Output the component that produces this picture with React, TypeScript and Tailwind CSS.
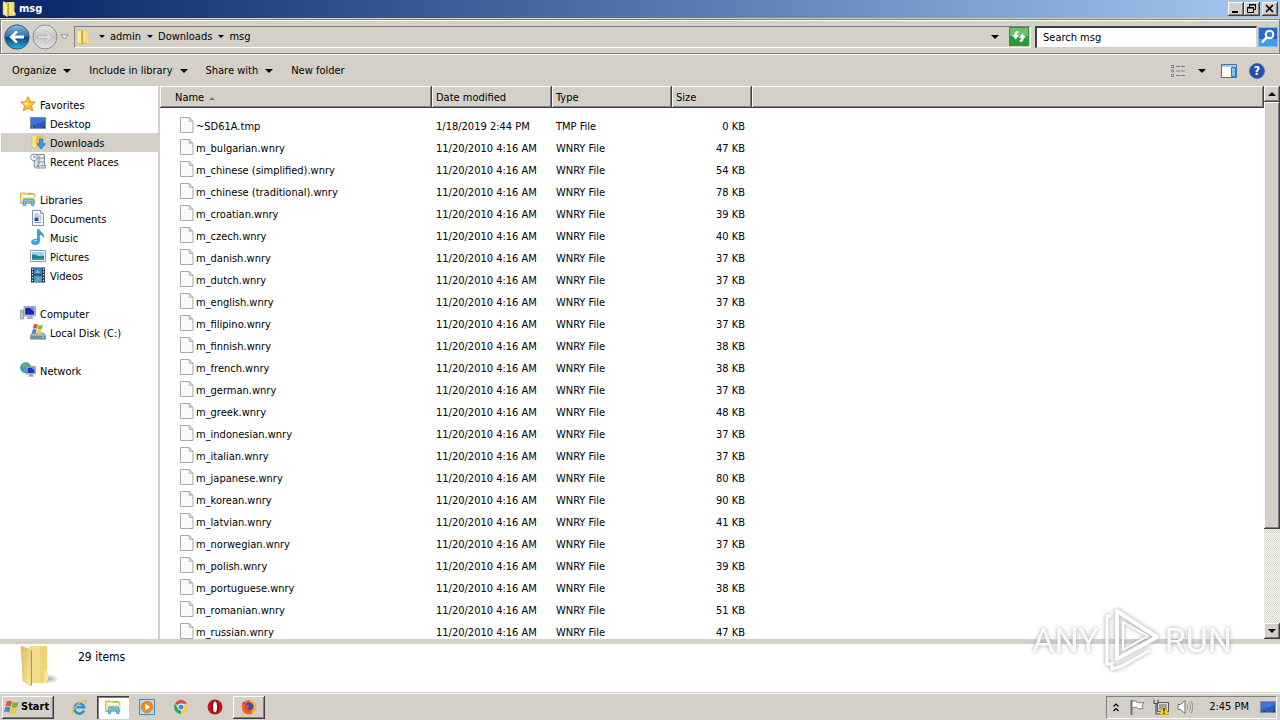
import { ReactNode } from "react";

const raised =
  "bg-[#d4d0c8] shadow-[inset_-1px_-1px_#404040,inset_1px_1px_#ffffff,inset_-2px_-2px_#808080]";
const sunken = "border border-t-[#808080] border-l-[#808080] border-b-white border-r-white";

const files = [
  { name: "~SD61A.tmp", date: "1/18/2019 2:44 PM", type: "TMP File", size: 0 },
  ...(
    [
      ["bulgarian", 47],
      ["chinese (simplified)", 54],
      ["chinese (traditional)", 78],
      ["croatian", 39],
      ["czech", 40],
      ["danish", 37],
      ["dutch", 37],
      ["english", 37],
      ["filipino", 37],
      ["finnish", 38],
      ["french", 38],
      ["german", 37],
      ["greek", 48],
      ["indonesian", 37],
      ["italian", 37],
      ["japanese", 80],
      ["korean", 90],
      ["latvian", 41],
      ["norwegian", 37],
      ["polish", 39],
      ["portuguese", 38],
      ["romanian", 51],
      ["russian", 47],
    ] as [string, number][]
  ).map(([lang, size]) => ({
    name: `m_${lang}.wnry`,
    date: "11/20/2010 4:16 AM",
    type: "WNRY File",
    size,
  })),
];

function Svg({ children, className = "size-4" }: { children: ReactNode; className?: string }) {
  return (
    <svg viewBox="0 0 16 16" className={`shrink-0 ${className}`} fill="none" aria-hidden="true">
      {children}
    </svg>
  );
}

function Caret({ className = "w-[8px]" }: { className?: string }) {
  return (
    <svg viewBox="0 0 8 4" className={`shrink-0 ${className}`} aria-hidden="true">
      <path d="M0 0h8L4 4z" fill="#000" />
    </svg>
  );
}

function FolderIcon({ className }: { className?: string }) {
  return (
    <Svg className={className}>
      <path d="M6 1h7.5v10l1.2 1v2.5L12 15H6z" fill="#e9cc62" />
      <path d="M7 1.5h5.5v12H7z" fill="#f5e08c" />
      <path d="M2 .5 6.6 2v13.8L2 13.6z" fill="#f9eba6" stroke="#cfa93c" strokeWidth=".5" />
      <path d="M6.6 2 8 1.6v12.8l-1.4 1.3z" fill="#c99f32" />
      <path d="M12.4 10.5c1 .3 1.4 1.2 1.2 3l-1.4.8z" fill="#fff4c4" />
    </Svg>
  );
}

function StarIcon() {
  return (
    <Svg>
      <path
        d="m8 .8 2.1 4.8 5.2.5-3.9 3.5 1.2 5.2L8 12.1l-4.6 2.7 1.2-5.2L.7 6.1l5.2-.5z"
        fill="#fdc030"
        stroke="#e8882a"
      />
      <path d="M8 3 6.6 6.6 3 7l3 2.4L8 8.6z" fill="#ffe98a" />
    </Svg>
  );
}

function DesktopIcon({ className }: { className?: string }) {
  return (
    <Svg className={className}>
      <path d="M.5 2.5h15v11H.5z" fill="#2858bc" stroke="#6d8fb9" />
      <path d="M1 3h14v3L1 11z" fill="#3f72d3" />
      <path d="M1 11.4h14V13H1z" fill="#173a78" />
      <path d="M1.5 11.5h2v1h-2z" fill="#5cc46a" />
      <path d="M5 12h8" stroke="#7ba4db" strokeWidth=".6" />
    </Svg>
  );
}

function DownloadsIcon() {
  return (
    <Svg>
      <path d="M2 1.5 6 .7v14L2 13z" fill="#f7e59b" stroke="#d0a840" strokeWidth=".5" />
      <path d="M6 1h7v13H6z" fill="#e6c65a" />
      <path d="M9.5 5h3.4v4.8h2.6L11.2 15 7 9.8h2.5z" fill="#359cdf" stroke="#1d6cae" strokeWidth=".7" />
    </Svg>
  );
}

function RecentIcon() {
  return (
    <Svg>
      <path d="M5 1.500h9.500v11H16V15H5.500L4 13z" fill="#dfe7ee" stroke="#71808e" strokeWidth=".9" />
      <path d="M8 4h2v2H8zM11.500 5H14M8 8h2v2H8zM11.500 9H14M7 12h2v1.500H7zM10.500 12.700H14" fill="#fff" stroke="#5f7389" strokeWidth=".8" />
      <circle cx="4" cy="4.300" r="3.400" fill="#f2f7fc" stroke="#7288a0" strokeWidth=".9" />
      <path d="M4 2.300v2.200h1.600" stroke="#4f6680" strokeWidth=".8" />
    </Svg>
  );
}

function LibraryIcon({ className }: { className?: string }) {
  return (
    <Svg className={className}>
      <path d="M.6 2h5l1 1.2h8.2v9.3H.6z" fill="#f4df86" stroke="#c9a33c" strokeWidth=".8" />
      <path d="M2 4h11.500v2H2z" fill="#fffbe0" />
      <path d="M7.500 2.400h6" stroke="#7cbf55" />
      <path d="M1 6.200h14v4H1z" fill="#f9eaa6" />
      <path d="M3.300 14.600V9.200q0-1.200 1.200-1.200h8.200q1.200 0 1.200 1.200v5.400h-2.300v-3.500h-6v3.500z" fill="#79c7ec" stroke="#3588b9" strokeWidth=".8" />
    </Svg>
  );
}

function DocumentsIcon() {
  return (
    <Svg>
      <path d="M2.500.500h8l3 3v12h-11z" fill="#fbfdff" stroke="#7e93ad" />
      <path d="M10.500.500v3h3" fill="#d4e0ed" stroke="#7e93ad" />
      <path d="M4.500 4h4M4.500 6h7M9.500 8h2M9.500 10h2M4.500 12.500h7" stroke="#5d81b5" strokeWidth=".8" />
      <path d="M4.500 7.500h4v3.500h-4z" fill="#254f86" />
    </Svg>
  );
}

function MusicIcon() {
  return (
    <Svg>
      <path d="M7.500.500h1.600c.3 2.300 4.900 3 4.600 7.700-.8-1.900-2.500-2.700-4.300-2.800v7.100c0 1.800-1.700 3.100-4.300 3.100-2.200 0-3.600-1-3.600-2.600 0-2 2.900-3.200 6-2.400z" fill="#35a6e3" stroke="#1d75b5" strokeWidth=".6" />
      <path d="M3.500 12.700c.6-1 2-1.500 3.400-1.200" stroke="#b4e4fb" />
    </Svg>
  );
}

function PicturesIcon() {
  return (
    <Svg>
      <path d="M.5 2.500h15v11H.5z" fill="#fff" stroke="#8d9aa8" />
      <path d="M2 4h12v8H2z" fill="#8fd3ee" />
      <path d="M2 7c2-1.500 5 1 7 1.200 2 .2 3-.6 5-.5V12H2z" fill="#2d7f76" />
      <path d="M2 10h12v2H2z" fill="#2a8fc0" />
    </Svg>
  );
}

function VideosIcon() {
  return (
    <Svg>
      <path d="M1 .500h14v15H1z" fill="#22303c" />
      <path d="M4 1h8v6.500H4z" fill="#347fbc" />
      <path d="M4 8.500h8V15H4z" fill="#3ba3c5" />
      <path d="m5 6 2.500-3L11 6z" fill="#7fb6d9" />
      <path d="m6 13 2-3 3 3z" fill="#d5855b" />
      <path d="M2.500 1.500v14M13.500 1.500v14" stroke="#e9eef2" strokeWidth="1.300" strokeDasharray="1.400 1.400" />
    </Svg>
  );
}

function ComputerIcon() {
  return (
    <Svg>
      <path d="M.5 5h3v9h-3z" fill="#c9d0cc" stroke="#7e8b83" strokeWidth=".7" />
      <path d="M1.300 7h1.500" stroke="#63a04d" />
      <path d="M4 1.500h11.500v9.500H4z" fill="#cfd4e3" stroke="#7f86a2" strokeWidth=".7" />
      <path d="M5.200 2.700h9v7h-9z" fill="#1726b3" />
      <path d="M9.500 2.700h4.700v4z" fill="#6e8bf0" />
      <path d="M8 11h4l1.500 3h-7z" fill="#aab0bd" />
    </Svg>
  );
}

function WindowsFlag({ className }: { className?: string }) {
  return (
    <Svg className={className}>
      <path d="M2.800 2.600C4.500 1.300 6.200 1.400 8 2.500L6.700 7.500C5 6.400 3.300 6.300 1.500 7.500z" fill="#e8552d" />
      <path d="M8.900 2.900c1.900 1.100 3.700 1.100 5.900-.2L13.400 7.800c-2 1.300-3.800 1.200-5.800.1z" fill="#78b833" />
      <path d="M1.200 8.500c1.900-1.200 3.500-1 5.200 0L5.100 13.400c-1.600-1-3.300-1.100-5.100 0z" fill="#3c86d8" />
      <path d="M7.300 8.900c2 1.100 3.800 1.200 5.800-.1l-1.300 5c-2 1.300-3.900 1.200-5.800.1z" fill="#f7c62c" />
    </Svg>
  );
}

function DiskIcon() {
  return (
    <Svg>
      <path d="M2.500 9h11l2.300 2.500v3.700H.3v-3.700z" fill="#a9bac4" stroke="#62737d" strokeWidth=".6" />
      <path d="M.6 11.700h15v3.200H.6z" fill="#6e94a6" />
      <path d="M12 13.300h2" stroke="#7ff09a" />
      <path d="M3.800.6C5.200-.3 6.500-.2 7.900.6L6.800 4.700c-1.400-.8-2.600-.7-4 .1z" fill="#e6562c" />
      <path d="M8.500.9c1.400.8 2.800.8 4.300-.2L11.700 5c-1.500.8-2.900.8-4.300 0z" fill="#7dbb36" />
      <path d="M2.700 5.500c1.400-.8 2.600-.7 4 0L5.600 9.700c-1.400-.8-2.600-.8-4 0z" fill="#3f8bdb" />
      <path d="M7.300 5.800c1.400.8 2.800.8 4.300-.1l-1.100 4.100c-1.500.8-2.900.8-4.300 0z" fill="#f8c82e" />
    </Svg>
  );
}

function NetworkIcon() {
  return (
    <Svg>
      <circle cx="5.700" cy="5.700" r="5.200" fill="#3a9fd0" stroke="#21749f" strokeWidth=".5" />
      <path d="M2 2.500c2-1.500 5-1.500 6 0L6.500 5 3.500 6zM2.500 8l3 .5L6 10.500H4z" fill="#5dbb5c" />
      <path d="M6.500 4.500h9v7.500h-9z" fill="#c8d3ea" stroke="#6f7ca2" strokeWidth=".6" />
      <path d="M7.500 5.500h7v5.500h-7z" fill="#1836c4" />
      <path d="M11 5.500h3.500v3z" fill="#7698f5" />
      <path d="M9.500 12h3l1.300 2.700H8.300z" fill="#9aa3b2" />
    </Svg>
  );
}

function PageIcon() {
  return (
    <Svg>
      <path d="M.5.500h8.700l3.800 3.800v11.200H.5z" fill="#fafafa" stroke="#a8a8a8" />
      <path d="M9.200.500v3.800H13z" fill="#e3e3e3" stroke="#a8a8a8" strokeWidth=".8" />
    </Svg>
  );
}

function BackIcon() {
  return (
    <svg viewBox="0 0 26 26" className="size-[26px]" fill="none" aria-hidden="true">
      <defs>
        <linearGradient id="back" x1="0" y1="0" x2="0" y2="1">
          <stop offset="0" stopColor="#8fb9dd" />
          <stop offset=".48" stopColor="#2b71ac" />
          <stop offset=".52" stopColor="#0b4380" />
          <stop offset="1" stopColor="#23b7e6" />
        </linearGradient>
      </defs>
      <circle cx="13" cy="13" r="12.200" fill="url(#back)" stroke="#3b5877" />
      <path d="m12 6.500-6.500 6.500 6.500 6.500 1.800-1.800-3.200-3.200H20v-3h-9.400l3.200-3.200z" fill="#fff" />
    </svg>
  );
}

function ForwardIcon() {
  return (
    <svg viewBox="0 0 26 26" className="size-[26px]" fill="none" aria-hidden="true">
      <defs>
        <linearGradient id="fwd" x1="0" y1="0" x2="0" y2="1">
          <stop offset="0" stopColor="#e9e9e9" />
          <stop offset=".5" stopColor="#c4c4c4" />
          <stop offset="1" stopColor="#e4e4e4" />
        </linearGradient>
      </defs>
      <circle cx="13" cy="13" r="12" fill="url(#fwd)" stroke="#8d8d8d" />
      <path d="m14 6.500 6.500 6.500-6.500 6.500-1.800-1.800 3.200-3.200H6v-3h9.400l-3.200-3.200z" fill="#dadada" stroke="#b5b5b5" strokeWidth=".7" />
    </svg>
  );
}

function TitleBar() {
  return (
    <header className="flex h-[18px] shrink-0 items-center bg-linear-to-r from-[#0a246a] to-[#a6caf0] pr-[2px] pl-px">
      <FolderIcon />
      <h1 className="ml-[2px] flex-1 font-bold text-white">msg</h1>
      <button aria-label="Minimize" className={`h-[14px] w-4 ${raised}`}>
        <svg viewBox="0 0 16 14" aria-hidden="true">
          <path d="M4 9h6v2H4z" />
        </svg>
      </button>
      <button aria-label="Restore" className={`h-[14px] w-4 ${raised}`}>
        <svg viewBox="0 0 16 14" fill="none" stroke="#000" aria-hidden="true">
          <path d="M5.500 5V2.500h6v5H10M5 3h7M3.500 5.500h6v5h-6zM3 6h7" />
        </svg>
      </button>
      <button aria-label="Close" className={`ml-[2px] h-[14px] w-4 ${raised}`}>
        <svg viewBox="0 0 16 14" fill="none" stroke="#000" strokeWidth="1.600" aria-hidden="true">
          <path d="m4 3 7 7M11 3l-7 7" />
        </svg>
      </button>
    </header>
  );
}

function AddressBar() {
  return (
    <div className="mt-px flex h-[35px] shrink-0 items-center border border-[#808080] pr-px pl-[3px] shadow-[inset_1px_1px_#fff,0_1px_#fff]">
      <button aria-label="Back">
        <BackIcon />
      </button>
      <button aria-label="Forward" className="ml-[2px]">
        <ForwardIcon />
      </button>
      <button aria-label="Recent pages" className="ml-[2px]">
        <svg viewBox="0 0 9 6" className="w-[9px]" fill="#f3f1ee" stroke="#8a8a8a" aria-hidden="true">
          <path d="M.8.800h7.400L4.500 5z" />
        </svg>
      </button>
      <nav className={`ml-[5px] flex h-[22px] flex-1 items-center ${sunken}`}>
        <FolderIcon />
        <Caret className="ml-2 w-[6px]" />
        {["admin", "Downloads"].map((p) => (
          <span key={p} className="flex items-center">
            <a href="#" className="ml-[5px]">{p}</a>
            <Caret className="ml-[6px] w-[6px]" />
          </span>
        ))}
        <a href="#" className="ml-[5px] flex-1">msg</a>
        <button aria-label="Previous locations" className="mr-[10px]">
          <Caret />
        </button>
        <button aria-label="Refresh" className="mr-px">
          <svg viewBox="0 0 20 19" className="h-[19px] w-5" aria-hidden="true">
            <path d="M0 0h20v19H0z" fill="#2b9a3b" />
            <path d="M1 1h18v8H1z" fill="#69bf6b" />
            <path d="M9 4C6.500 4 5.300 5.500 5.300 8H3l3.700 4.500L10.300 8H8c0-1.200.3-2 1.500-2.200zM11 15c2.500 0 3.700-1.500 3.700-4H17l-3.700-4.500L9.700 11H12c0 1.200-.3 2-1.500 2.200z" fill="#fff" />
          </svg>
        </button>
      </nav>
      <div className="ml-1 flex h-[22px] w-[243px] items-center">
        <input
          type="text"
          aria-label="Search"
          placeholder="Search msg"
          className="h-full min-w-0 flex-1 border border-t-2 border-l-2 border-t-[#404040] border-r-[#d4d0c8] border-b-[#d4d0c8] border-l-[#404040] bg-white pl-[6px] outline-none placeholder:text-black"
        />
        <button aria-label="Go" className="ml-px">
          <svg viewBox="0 0 20 20" className="size-5" fill="none" aria-hidden="true">
            <path d="M.5.500h19v19H.5z" fill="#2c62d0" stroke="#8ab3ea" />
            <path d="M1 12h18v7H1z" fill="#36a3e8" />
            <circle cx="11.500" cy="7.500" r="3.800" fill="#3d78dc" stroke="#fff" strokeWidth="2" />
            <path d="m8.500 10.500-4.500 5" stroke="#fff" strokeWidth="2.400" />
          </svg>
        </button>
      </div>
    </div>
  );
}

function Toolbar() {
  return (
    <div className="mt-px flex h-[31px] shrink-0 items-center gap-[18px] pr-[15px] pl-3">
      {["Organize", "Include in library", "Share with"].map((label) => (
        <button key={label} className="flex items-center gap-[7px]">
          {label}
          <Caret />
        </button>
      ))}
      <button>New folder</button>
      <div className="ml-auto flex items-center">
        <button aria-label="Change your view">
          <Svg>
            <path d="M1.500 2.500h2v2h-2zM1.500 7h2v2h-2zM1.500 11.500h2v2h-2z" fill="#fff" stroke="#6d7c90" />
            <path d="M6 3.500h4M11 3.500h4M6 8h4M11 8h4M6 12.500h4M11 12.500h4" stroke="#6d7c90" />
          </Svg>
        </button>
        <button aria-label="More options" className="ml-3">
          <Caret />
        </button>
        <button aria-label="Preview pane" className="ml-[15px]">
          <Svg>
            <path d="M.5 1.500h15v13H.5z" fill="#fff" stroke="#3f74a6" />
            <path d="M1 2h14v2H1z" fill="#a9cde8" />
            <path d="M10.500 4.500h4v9h-4z" fill="#7fc1e8" stroke="#3f74a6" />
          </Svg>
        </button>
        <button
          aria-label="Help"
          className="ml-3 flex size-4 items-center justify-center rounded-full border border-[#5c6f9b] bg-[#234fae] text-xs font-bold text-white"
        >
          ?
        </button>
      </div>
    </div>
  );
}

const places = [
  {
    title: "Favorites",
    icon: <StarIcon />,
    items: [
      { label: "Desktop", icon: <DesktopIcon /> },
      { label: "Downloads", icon: <DownloadsIcon />, active: true },
      { label: "Recent Places", icon: <RecentIcon /> },
    ],
  },
  {
    title: "Libraries",
    icon: <LibraryIcon />,
    items: [
      { label: "Documents", icon: <DocumentsIcon /> },
      { label: "Music", icon: <MusicIcon /> },
      { label: "Pictures", icon: <PicturesIcon /> },
      { label: "Videos", icon: <VideosIcon /> },
    ],
  },
  { title: "Computer", icon: <ComputerIcon />, items: [{ label: "Local Disk (C:)", icon: <DiskIcon /> }] },
  { title: "Network", icon: <NetworkIcon />, items: [] },
];

function Sidebar() {
  const row = "flex h-[19px] items-start gap-1 pt-px leading-[19px]";
  return (
    <aside className="flex w-[158px] shrink-0 flex-col gap-[19px] bg-white pt-[9px] pl-px">
      {places.map((group) => (
        <div key={group.title}>
          <a href="#" className={`${row} pl-[19px]`}>
            {group.icon}
            {group.title}
          </a>
          {group.items.map((item: { label: string; icon: ReactNode; active?: boolean }) => (
            <a
              key={item.label}
              href="#"
              className={`${row} pl-[29px] ${item.active ? "bg-[#d4d0c8]" : ""}`}
            >
              {item.icon}
              {item.label}
            </a>
          ))}
        </div>
      ))}
    </aside>
  );
}

function FileList() {
  const th = `h-[22px] pt-[2px] pl-1 text-left font-normal ${raised}`;
  const td = "pt-[2px] leading-[20px]";
  return (
    <div className="min-w-0 flex-1 overflow-hidden bg-white">
      <table className="w-full table-fixed border-collapse">
        <colgroup>
          <col className="w-[272px]" />
          <col className="w-[120px]" />
          <col className="w-[120px]" />
          <col className="w-[80px]" />
          <col />
        </colgroup>
        <thead>
          <tr>
            <th className={`h-[22px] pt-[2px] pl-[15px] text-left font-normal ${raised}`}>
              <span className="flex items-center gap-[5px]">
                Name
                <svg viewBox="0 0 6 3" className="w-[6px]" aria-hidden="true">
                  <path d="M0 3h6L3 0z" fill="#808080" />
                </svg>
              </span>
            </th>
            <th className={th}>Date modified</th>
            <th className={th}>Type</th>
            <th className={th}>Size</th>
            <td className={raised} />
          </tr>
        </thead>
        <tbody className="before:block before:h-[7px]">
          {files.map((f) => (
            <tr key={f.name} className="h-[22px]">
              <td className={`${td} pl-5`}>
                <span className="flex items-start">
                  <PageIcon />
                  {f.name}
                </span>
              </td>
              <td className={`${td} pl-1`}>{f.date}</td>
              <td className={`${td} pl-1`}>{f.type}</td>
              <td className={`${td} pr-[7px] text-right`}>{f.size} KB</td>
              <td />
            </tr>
          ))}
        </tbody>
      </table>
    </div>
  );
}

function Scrollbar() {
  return (
    <div className="flex w-4 shrink-0 flex-col bg-[repeating-conic-gradient(#ffffff_0_25%,#d4d0c8_0_50%)] bg-[length:2px_2px]">
      <button aria-label="Scroll up" className={`flex h-4 items-center justify-center ${raised}`}>
        <Caret className="w-[8px] rotate-180" />
      </button>
      <div className={`flex-[427] ${raised}`} />
      <div className="flex-[94]" />
      <button aria-label="Scroll down" className={`flex h-4 items-center justify-center ${raised}`}>
        <Caret />
      </button>
    </div>
  );
}

function Watermark() {
  return (
    <div className="pointer-events-none absolute right-12 bottom-12 flex h-16 items-center gap-1 font-[Roboto,'Liberation_Sans',sans-serif] text-[34px] leading-none text-white/90 drop-shadow-[0_0_2px_#9a9a9a]">
      <span>ANY</span>
      <svg viewBox="0 0 58 64" className="h-16 w-[58px] shrink-0" fill="none" stroke="#fff" strokeLinejoin="round" aria-hidden="true">
        <path d="M14 3v48L54 29z" strokeWidth="4" />
        <path d="M20 14v28l25-14z" strokeWidth="2" />
        <path d="M8 8H4v48h4M9 54v7l10-3 28-16" strokeWidth="3" />
      </svg>
      <span>RUN</span>
    </div>
  );
}

function BigFolder() {
  return (
    <svg viewBox="0 0 40 44" className="h-11 w-10" fill="none" aria-hidden="true">
      <defs>
        <linearGradient id="flap" x1="0" y1="0" x2="1" y2="1">
          <stop offset="0" stopColor="#d9bd62" />
          <stop offset="1" stopColor="#fbe99b" />
        </linearGradient>
        <radialGradient id="shade">
          <stop offset="0" stopColor="#aaa" />
          <stop offset="1" stopColor="#fff" />
        </radialGradient>
      </defs>
      <ellipse cx="28" cy="35" rx="11" ry="5" fill="url(#shade)" />
      <path d="M9 2h18v34l-3 3H11z" fill="#f3dc8b" />
      <path d="M20 2h7v34l-7 2z" fill="#efd47a" />
      <path d="M25 26c3 1 4 4 3 10l-4 2z" fill="#f8e8a0" />
      <path d="m1 2 10 4v36L3 37z" fill="url(#flap)" stroke="#d4b253" strokeWidth=".5" />
      <path d="M11 6v36l1-1V7z" fill="#b7953d" />
    </svg>
  );
}

function Taskbar() {
  const item = "flex h-[23px] w-8 items-center justify-center";
  return (
    <footer className="flex h-[27px] shrink-0 items-center border-t border-white pr-[3px] pl-[2px]">
      <button className={`flex h-[23px] w-[52px] items-center gap-px pl-[2px] font-bold ${raised}`}>
        <WindowsFlag />
        Start
      </button>
      <div className="ml-[9px] flex items-center gap-[2px]">
        <button aria-label="Internet Explorer" className={item}>
          <Svg>
            <path d="M13 10.500a5 5 0 1 1 .2-3.300H5.300" stroke="#2d91d8" strokeWidth="2.600" transform="translate(0 1)" />
            <path d="M1.500 15C-.5 12 8 2.500 13.500 1.500c2-.3 2 1.500.8 3.500" stroke="#e5bd3c" strokeWidth="1.200" />
          </Svg>
        </button>
        <button
          aria-label="Explorer"
          className={`${item} bg-white shadow-[inset_1px_1px_#404040,inset_2px_2px_#808080,inset_-1px_-1px_#ffffff]`}
        >
          <LibraryIcon />
        </button>
        <button aria-label="Media Player" className={item}>
          <Svg>
            <path d="M.5.500h15v15H.5z" fill="#b9dcf4" stroke="#4289c0" />
            <circle cx="8" cy="8" r="5.800" fill="#f08a1d" stroke="#d06d10" strokeWidth=".6" />
            <path d="m6.200 4.800 5 3.200-5 3.200z" fill="#fff" />
          </Svg>
        </button>
        <button aria-label="Chrome" className={item}>
          <Svg>
            <path d="M8 8 2 4.500A7 7 0 0 1 14.200 4.700H8z" fill="#dd4b3e" />
            <path d="M8 8 14.200 4.700A7 7 0 0 1 8 15l3-5.500z" fill="#fbcc3a" />
            <path d="M8 8 8 15A7 7 0 0 1 2 4.500L5 9.700z" fill="#35a455" />
            <circle cx="8" cy="8" r="3.400" fill="#fff" />
            <circle cx="8" cy="8" r="2.600" fill="#4687f1" />
          </Svg>
        </button>
        <button aria-label="Opera" className={item}>
          <Svg>
            <circle cx="8" cy="8" r="7.500" fill="#c3161c" />
            <ellipse cx="8" cy="8" rx="4.200" ry="6.500" fill="#8d0d12" />
            <ellipse cx="8" cy="8" rx="2" ry="5.400" fill="#fff" />
          </Svg>
        </button>
        <button aria-label="Firefox" className={`${item} ${raised}`}>
          <Svg>
            <circle cx="8" cy="8.300" r="7.300" fill="#f4661d" />
            <path d="M9 .500c3 1 6.300 4 6.300 8 0 2.500-1.500 5-3.800 6.300L9 10z" fill="#fbb72c" />
            <path d="M1 6 2.200 2.500 4 4l2-1z" fill="#e5333f" />
            <circle cx="8.300" cy="7.600" r="4.300" fill="#3d49b5" />
            <path d="M3 6.500c2-1 4 0 5.500 1-1 1.300-1.700 1.300-2.500 1.700 1 2 3.700 2 5.500.5-.5 3.300-4 4.300-6.300 2.900C3.600 11.600 2.600 9 3 6.500z" fill="#ef4a2b" />
          </Svg>
        </button>
      </div>
      <div className={`ml-auto flex h-[23px] items-center pl-[6px] ${sunken}`}>
        <button aria-label="Show hidden icons">
          <svg viewBox="0 0 6 9" className="w-[6px]" fill="none" stroke="#000" strokeWidth="1.200" aria-hidden="true">
            <path d="m.5 3.500 2.500-2.500 2.500 2.500M.5 8l2.500-2.500L5.500 8" />
          </svg>
        </button>
        <Svg className="ml-[10px] size-4">
          <path d="M2.500 1v15" stroke="#6f6f6f" strokeWidth="2" />
          <path d="M3 2.500c2-1 3.500-.5 5 .500s4 1 7 .500l-2 3.500 1 2.500c-2 .5-4 .5-5.500-.5S5 8 3 9z" fill="#fff" stroke="#6f6f6f" strokeWidth=".9" />
        </Svg>
        <Svg className="ml-2 size-4">
          <path d="M4.500 3.500h11v9h-11z" fill="#d9dde2" stroke="#555" />
          <path d="M6 5h8v6H6z" fill="#9ba4b0" />
          <path d="M1 .800v3.700h4V.800M3 4.500V15h5" stroke="#555" strokeWidth="1.200" />
          <path d="m11 6.500 5 9H6z" fill="#ffd42a" stroke="#b88c00" strokeWidth=".6" />
          <path d="M11 9v3.500M11 13.500V15" stroke="#000" strokeWidth="1.200" />
        </Svg>
        <Svg className="ml-2 size-4">
          <path d="M1 5.500h2.500L8 1.500v13l-4.500-4H1z" fill="#fff" stroke="#6f6f6f" />
          <path d="M10 5.500c1 1.500 1 3.500 0 5M12 3.500c2 2.500 2 6.500 0 9M14 2c2.300 3.500 2.300 8.500 0 12" stroke="#8a8a8a" strokeWidth=".9" />
        </Svg>
        <time className="ml-4">2:45 PM</time>
        <button aria-label="Show desktop" className="ml-[11px]">
          <DesktopIcon />
        </button>
      </div>
    </footer>
  );
}

export default function App() {
  return (
    <div className="relative flex h-screen flex-col overflow-hidden bg-[#d4d0c8] font-['DejaVu_Sans_Condensed',Tahoma,'DejaVu_Sans',sans-serif] text-[11px] leading-[14px] text-black">
      <TitleBar />
      <AddressBar />
      <Toolbar />
      <main className="flex min-h-0 flex-1">
        <Sidebar />
        <div className="w-[2px] shrink-0" />
        <FileList />
        <Scrollbar />
      </main>
      <section className="mt-[5px] mb-px flex h-[48px] shrink-0 items-start bg-white pl-5">
        <BigFolder />
        <p className="mt-[5px] ml-[18px] text-xs">29 items</p>
      </section>
      <Taskbar />
      <Watermark />
    </div>
  );
}
